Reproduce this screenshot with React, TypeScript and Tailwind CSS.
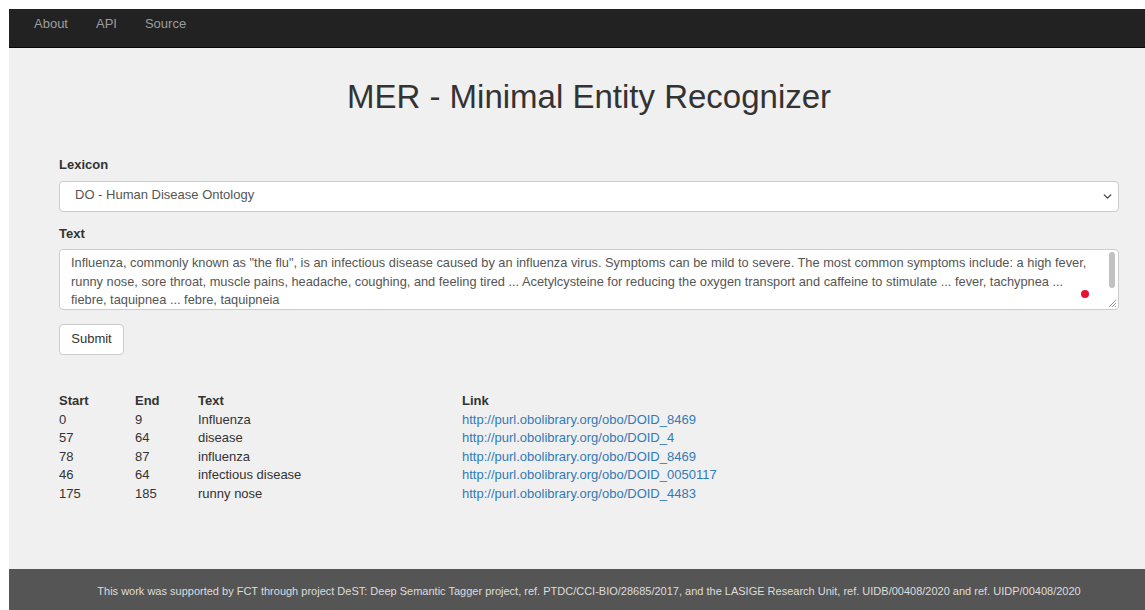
import { ChevronDown } from "lucide-react";

type Entity = {
  start: number;
  end: number;
  text: string;
  link: string;
};

const entities: Entity[] = [
  { start: 0, end: 9, text: "Influenza", link: "http://purl.obolibrary.org/obo/DOID_8469" },
  { start: 57, end: 64, text: "disease", link: "http://purl.obolibrary.org/obo/DOID_4" },
  { start: 78, end: 87, text: "influenza", link: "http://purl.obolibrary.org/obo/DOID_8469" },
  { start: 46, end: 64, text: "infectious disease", link: "http://purl.obolibrary.org/obo/DOID_0050117" },
  { start: 175, end: 185, text: "runny nose", link: "http://purl.obolibrary.org/obo/DOID_4483" },
];

const sampleText =
  'Influenza, commonly known as "the flu", is an infectious disease caused by an influenza virus. Symptoms can be mild to severe. The most common symptoms include: a high fever, runny nose, sore throat, muscle pains, headache, coughing, and feeling tired ... Acetylcysteine for reducing the oxygen transport and caffeine to stimulate ... fever, tachypnea ... fiebre, taquipnea ... febre, taquipneia';

export default function App() {
  return (
    <div className="h-[610px] w-[1145px] overflow-hidden bg-white font-['Liberation_Sans',Arial,sans-serif] text-[13px] text-[#333]">
      <div className="flex h-full w-[1169px] flex-col pl-[9px] pt-[9px]">
        <nav className="flex h-[39px] shrink-0 items-start gap-[28px] border-b border-[#080808] bg-[#222] pl-[25px] pt-[6px] leading-[18px] text-[#9d9d9d]">
          <a href="#about">About</a>
          <a href="#api">API</a>
          <a href="#source">Source</a>
        </nav>

        <main className="flex-1 bg-[#f0f0f0] px-[50px]">
          <h1 className="pt-[30px] text-center text-[33px] leading-[38px] text-[#333]">
            MER - Minimal Entity Recognizer
          </h1>

          <div className="mt-[39px]">
            <label className="block font-bold leading-[20px]">Lexicon</label>
            <div className="relative mt-[6px] flex h-[31px] items-center rounded-[4px] border border-[#ccc] bg-white pb-[3px] pl-[15px] text-[#555]">
              DO - Human Disease Ontology
              <ChevronDown className="absolute right-[4px] top-[8px] size-[13px] text-[#444]" strokeWidth={2.5} />
            </div>
          </div>

          <div className="mt-[12px]">
            <label className="block font-bold leading-[20px]">Text</label>
            <div className="relative mt-[5px] h-[61px] overflow-hidden rounded-[4px] border border-[#ccc] bg-white pl-[11px] pr-[19px] pt-[4px] text-[12.8px] leading-[18.5px] text-[#555]">
              {sampleText}
              <span className="absolute right-[3px] top-[2px] h-[36px] w-[6px] rounded-full bg-[#c1c1c1]" />
              <span className="absolute right-[29px] top-[40px] size-[8px] rounded-full bg-[#e8132b]" />
              <svg className="absolute bottom-[1px] right-[1px]" width="9" height="9" viewBox="0 0 9 9">
                <path d="M8 1L1 8M8 4L4 8M8 7L7 8" stroke="#999" strokeWidth="1" />
              </svg>
            </div>
          </div>

          <button
            type="button"
            className="mt-[14px] h-[31px] w-[65px] rounded-[4px] border border-[#ccc] bg-white pb-[1px] text-[#333]"
          >
            Submit
          </button>

          <table className="mt-[37px] w-full border-collapse text-left leading-[18.5px]">
            <thead>
              <tr>
                <th className="w-[76px] p-0 font-bold">Start</th>
                <th className="w-[63px] p-0 font-bold">End</th>
                <th className="w-[264px] p-0 font-bold">Text</th>
                <th className="p-0 font-bold">Link</th>
              </tr>
            </thead>
            <tbody>
              {entities.map((entity, index) => (
                <tr key={index}>
                  <td className="p-0">{entity.start}</td>
                  <td className="p-0">{entity.end}</td>
                  <td className="p-0">{entity.text}</td>
                  <td className="p-0">
                    <a href={entity.link} className="text-[#337ab7]">
                      {entity.link}
                    </a>
                  </td>
                </tr>
              ))}
            </tbody>
          </table>
        </main>

        <footer className="h-[41px] shrink-0 bg-[#555] pt-[14px] text-center text-[11px] leading-[16px] text-[#ddd]">
          This work was supported by FCT through project DeST: Deep Semantic Tagger project, ref. PTDC/CCI-BIO/28685/2017, and the LASIGE Research Unit, ref. UIDB/00408/2020 and ref. UIDP/00408/2020
        </footer>
      </div>
    </div>
  );
}
